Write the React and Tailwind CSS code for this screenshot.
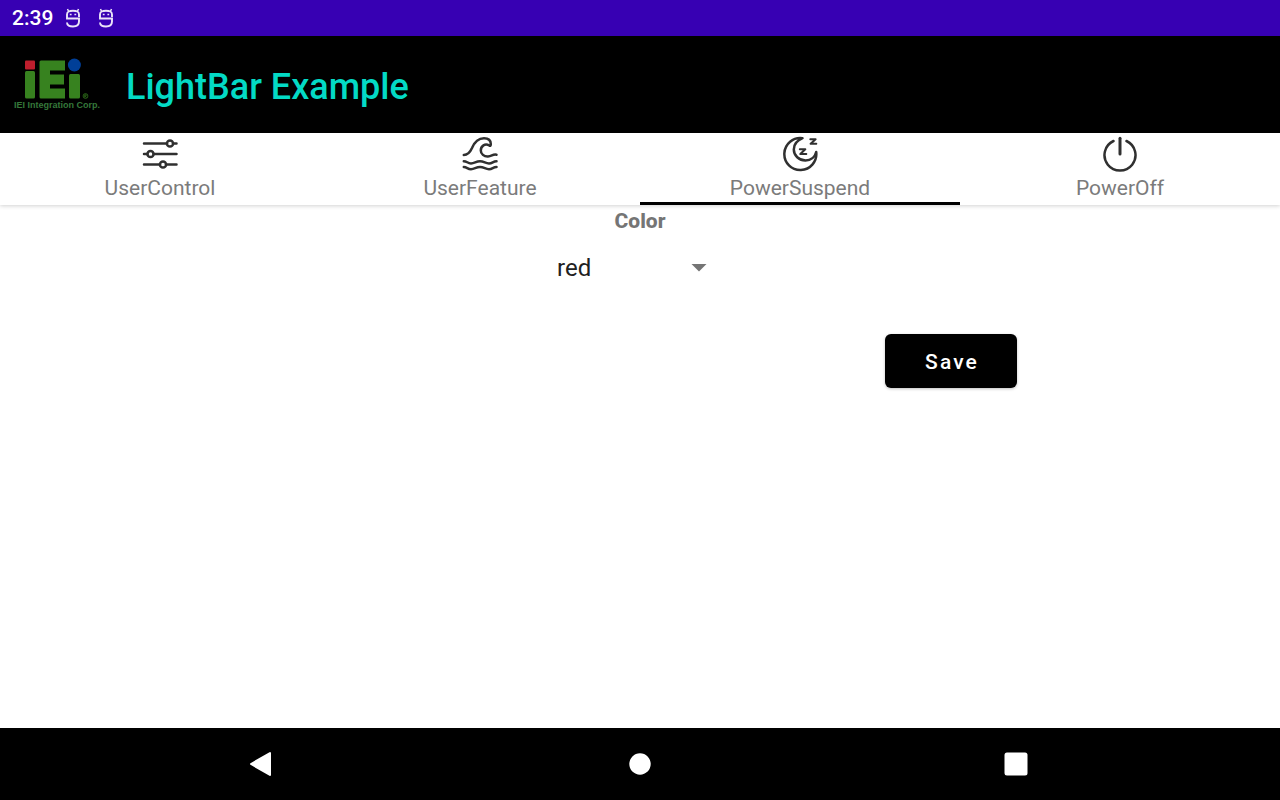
import { useState } from "react";

function DebugIcon() {
  return (
    <svg viewBox="0 0 16 20" className="h-5 w-4" fill="none" stroke="#ebe4f8" strokeWidth="1.900" aria-hidden="true">
      <path d="M14 9V6.500C14 3.500 11.500 2.800 8 2.800S2 3.500 2 6.500V10.500H14V13.500C14 17 11.500 18.500 8 18.500S2 17.500 2 14.500" />
      <path d="M3.800 3.800L2.500 1M12.200 3.800L13.500 1" strokeWidth="1.500" />
      <path d="M4.800 6.500h1.800M9.400 6.500h1.800" strokeWidth="1.700" />
    </svg>
  );
}

function Logo() {
  return (
    <svg viewBox="0 0 88 55" className="h-[55px] w-[88px] shrink-0" role="img" aria-label="IEI Integration Corp.">
      <rect x="11" y="3.500" width="10" height="9" rx="1" fill="#be1e2d" />
      <rect x="11" y="14" width="10" height="27.500" rx="1.500" fill="#37821f" />
      <path d="M27 3.500H51V13.500H36V17.500H50V27.500H36V31.500H51V41.500H27Q25.500 41.500 25.500 40V5Q25.500 3.500 27 3.500Z" fill="#37821f" />
      <rect x="55" y="17" width="11" height="24.500" rx="1.500" fill="#37821f" />
      <circle cx="60.400" cy="8" r="6.500" fill="#003f98" />
      <circle cx="71.500" cy="39" r="2.400" fill="none" stroke="#37821f" strokeWidth="0.7" />
      <path d="M70.700 40.500V37.700H72.200V39H70.700L72.500 40.500" fill="none" stroke="#37821f" strokeWidth="0.6" />
      <text x="0" y="51" fill="#35783a" className="font-['Liberation_Sans',sans-serif] text-[9px] font-bold">
        IEI Integration Corp.
      </text>
    </svg>
  );
}

function SlidersIcon() {
  return (
    <>
      <path d="M2 7.500H25M31 7.500H34.500M2 18H5.500M11.500 18H34.500M2 28.500H18M24 28.500H34.500" />
      <circle cx="28" cy="7.500" r="3.100" />
      <circle cx="8.500" cy="18" r="3.100" />
      <circle cx="21" cy="28.500" r="3.100" />
    </>
  );
}

function WaveIcon() {
  return (
    <>
      <path d="M1.800 19C6 19 8 16.500 10 12C12.500 6 16 2.200 22 2.200C26.500 2.200 28.800 4.500 28.800 8C28.800 9.500 28.300 10.200 27.300 9.500C23 7 18.800 10 18.800 14.500C18.800 18 22 20.700 26 20.500C30 20.300 30.500 18 34.500 18.700" />
      <path d="M1.800 25.200C5 25.200 5.500 27.400 9 27.400S14 25.200 18 25.200S23.500 27.400 27 27.400S31 25.200 34.500 25.200" />
      <path d="M1.800 31C5 31 5.500 33.200 9 33.200S14 31 18 31S23.500 33.200 27 33.200S31 31 34.500 31" />
    </>
  );
}

function SleepIcon() {
  return (
    <>
      <path d="M20.500 2.200A16 16 0 1 0 34.200 16C33 21 29 24.500 23.500 24.500C17 24.500 11.800 19.500 11.800 13.500C11.800 8.500 15 4.500 20.500 2.200Z" />
      <path d="M17.800 13.200H23.300L18.300 18H24.300M28.300 3.200H33.600L28.600 7.800H34.300" strokeWidth="2" />
    </>
  );
}

function PowerIcon() {
  return (
    <>
      <path d="M18 2.200V18" strokeWidth="3" />
      <path d="M11.500 5A15.500 15.500 0 1 0 24.500 5" />
    </>
  );
}

const tabs = [
  { name: "UserControl", Icon: SlidersIcon },
  { name: "UserFeature", Icon: WaveIcon },
  { name: "PowerSuspend", Icon: SleepIcon },
  { name: "PowerOff", Icon: PowerIcon },
];

export default function App() {
  const [active, setActive] = useState("PowerSuspend");
  const [color, setColor] = useState("red");

  return (
    <div className="flex min-h-screen flex-col bg-white font-[Roboto,sans-serif]">
      <div className="flex h-9 items-center bg-[#3700b3] px-3 text-white">
        <span className="text-[21px] leading-6 font-medium">2:39</span>
        <div className="ml-3 flex gap-[17px]">
          <DebugIcon />
          <DebugIcon />
        </div>
      </div>

      <header className="flex h-[97px] items-center gap-6 bg-black px-3.5">
        <Logo />
        <h1 className="pt-1 text-4xl font-medium text-[#03dac5]">LightBar Example</h1>
      </header>

      <nav className="grid h-[72px] grid-cols-4 bg-white shadow-[0_1px_4px_rgba(0,0,0,0.18)]" role="tablist">
        {tabs.map(({ name, Icon }) => (
          <button
            key={name}
            type="button"
            role="tab"
            aria-selected={active === name}
            onClick={() => setActive(name)}
            className={
              active === name
                ? "flex flex-col items-center border-b-3 border-black pt-[3px]"
                : "flex flex-col items-center border-b-3 border-transparent pt-[3px]"
            }
          >
            <svg
              viewBox="0 0 36 36"
              className="size-9 shrink-0"
              fill="none"
              stroke="#303030"
              strokeWidth="2.500"
              strokeLinecap="round"
              strokeLinejoin="round"
              aria-hidden="true"
            >
              <Icon />
            </svg>
            <span className="mt-1 text-[21px] leading-6 text-[#7b7b7b]">{name}</span>
          </button>
        ))}
      </nav>

      <main className="flex grow flex-col items-center pt-1">
        <label htmlFor="color" className="text-[21px] leading-6 font-extrabold text-[#757575]">
          Color
        </label>
        <div className="relative mt-[17px]">
          <select
            id="color"
            value={color}
            onChange={(e) => setColor(e.target.value)}
            className="h-9 w-[190px] appearance-none bg-transparent pr-12 pl-3 text-2xl text-[#212121]"
          >
            <option>red</option>
            <option>green</option>
            <option>blue</option>
          </select>
          <svg viewBox="0 0 16 8" className="pointer-events-none absolute top-3.5 right-7 h-2 w-4" aria-hidden="true">
            <path d="M0.500 0H15.500L8 7.500Z" fill="#757575" />
          </svg>
        </div>
        <div className="mt-12 flex w-full justify-end pr-[263px]">
          <button
            type="button"
            className="h-[54px] w-[132px] rounded-md bg-black pt-1 pl-0.5 text-[21px] font-medium tracking-widest text-white shadow-[0_1px_3px_rgba(0,0,0,0.25)]"
          >
            Save
          </button>
        </div>
      </main>

      <footer className="grid h-[72px] grid-cols-3 bg-black px-[76px]">
        <button type="button" aria-label="Back" className="flex items-center justify-center">
          <svg viewBox="0 0 36 36" className="size-9" fill="#fff" stroke="#fff" strokeWidth="2" strokeLinejoin="round">
            <path d="M5 18L24 7V29Z" />
          </svg>
        </button>
        <button type="button" aria-label="Home" className="flex items-center justify-center">
          <svg viewBox="0 0 36 36" className="size-9" fill="#fff">
            <circle cx="18" cy="18" r="10.700" />
          </svg>
        </button>
        <button type="button" aria-label="Recent apps" className="flex items-center justify-center">
          <svg viewBox="0 0 36 36" className="size-9" fill="#fff">
            <rect x="6.500" y="6.500" width="23" height="23" rx="2.500" />
          </svg>
        </button>
      </footer>
    </div>
  );
}
